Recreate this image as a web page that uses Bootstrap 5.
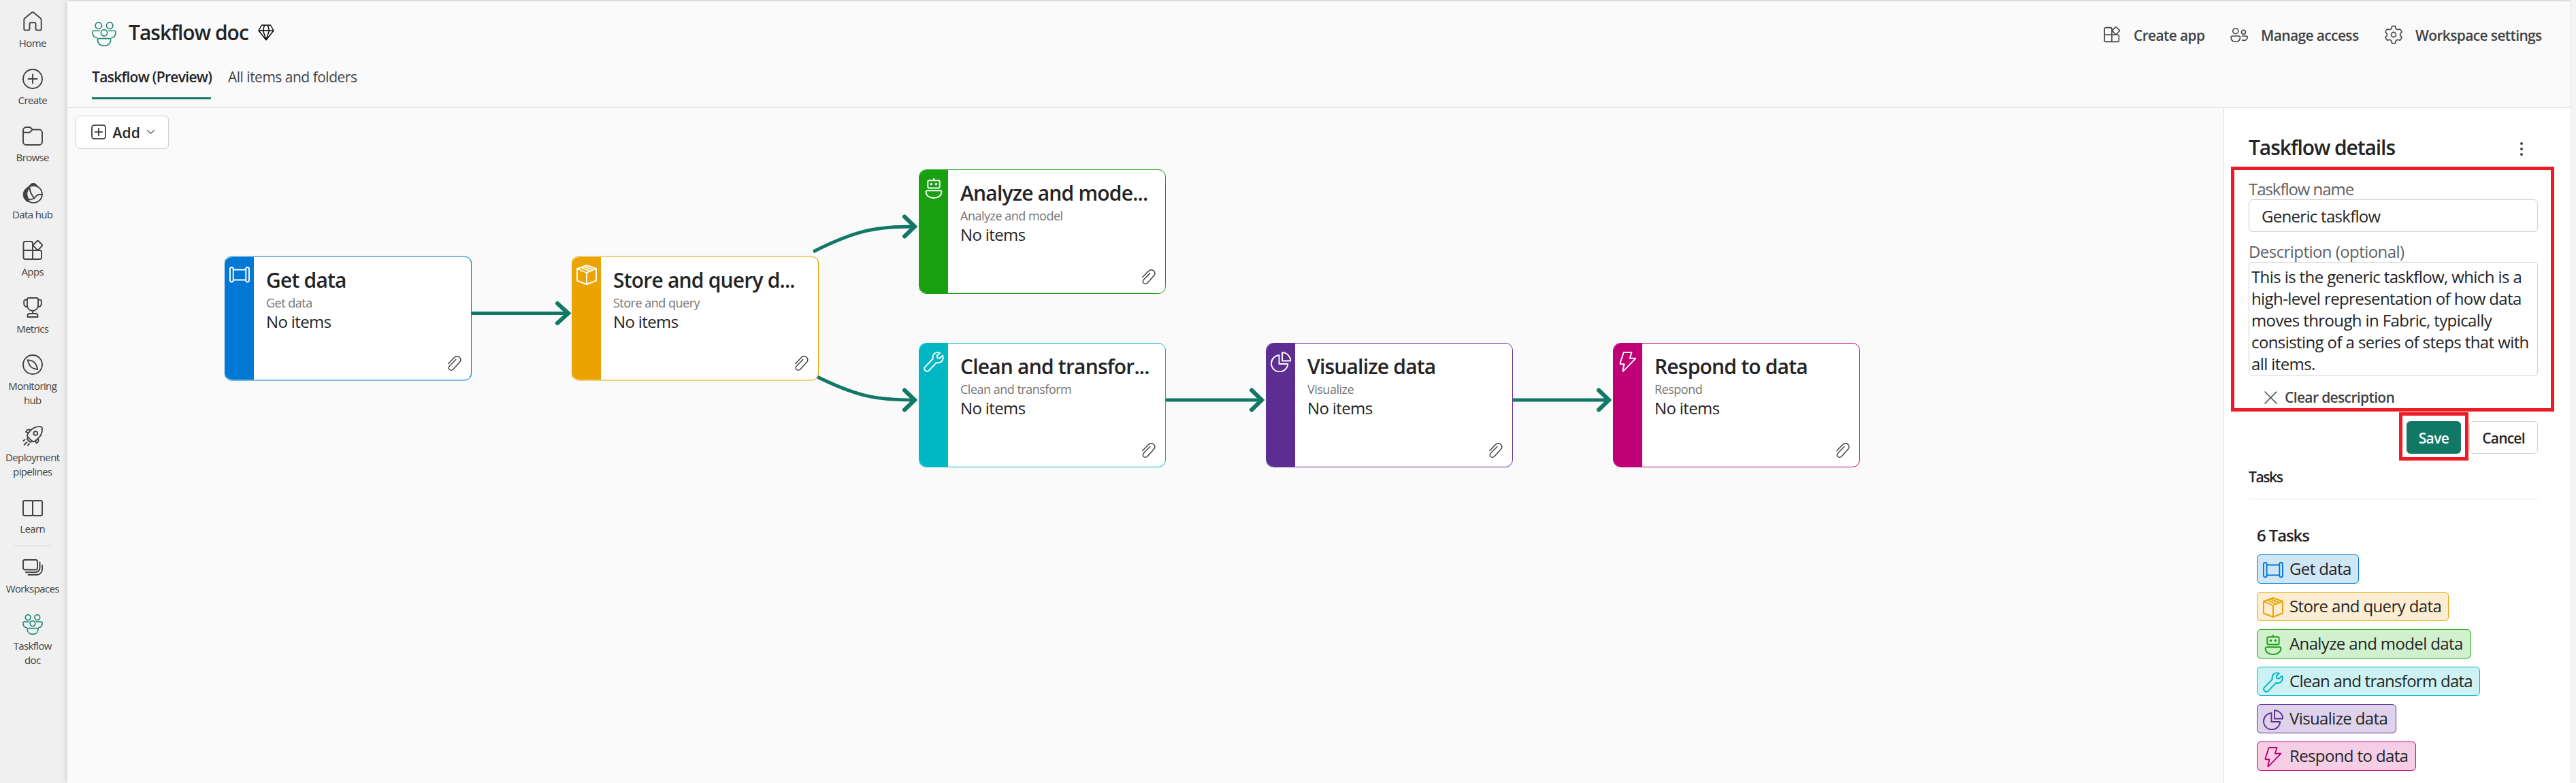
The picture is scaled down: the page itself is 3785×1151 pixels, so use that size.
<!DOCTYPE html>
<html lang="en">
<head>
<meta charset="utf-8">
<title>Taskflow doc</title>
<link rel="stylesheet" href="https://cdn.jsdelivr.net/npm/bootstrap@5.3.0/dist/css/bootstrap.min.css">
<script src="https://cdn.jsdelivr.net/npm/bootstrap@5.3.0/dist/js/bootstrap.bundle.min.js"></script>
<style>
body{font-family:"Open Sans","Noto Sans",sans-serif;font-size:24px;line-height:32px;color:#242424;background:#f0f0f0;letter-spacing:-.026em;overflow:hidden}
.shell{height:1151px}
.fw-semibold{font-weight:600!important}
svg{flex:none;fill:none;stroke:currentColor;stroke-linecap:round;stroke-linejoin:round;stroke-width:1.9px;overflow:visible}
symbol *{vector-effect:non-scaling-stroke}
.solid{fill:currentColor}
.i30{width:30px;height:30px}
/* left navigation */
.rail{width:98.5px;font-size:15px;line-height:21px;color:#424242}
.rail-item{padding:17px 6px 10px 3px;gap:6px}
.rail-sep{width:54px;margin:4px 0 -1px 21px;border-top:1px solid #d1d1d1}
.team{color:#1a8573;stroke-width:1.6px}
/* page frame */
.frame{margin-top:2px;background:#fafafa;box-shadow:0 0 9px rgba(0,0,0,.2);border-right:1px solid #e0e0e0}
.edge{width:7px;background:#f5f5f5}
.topbar{height:157px;border-bottom:1px solid #d1d1d1;padding:25px 0 0 36.5px}
.doc-title{font-size:30px;line-height:40px;letter-spacing:-1px;margin:1px 14px 0 18px}
.gem{color:#000;stroke-width:1.4px}
.tabs{gap:25px;font-size:21px;line-height:30px;padding-top:30px}
.tab-on{letter-spacing:-.7px;height:49px;width:175px;white-space:nowrap;padding-top:1px;border-bottom:3px solid #117865;border-radius:1px}
.tab-off{color:#424242;letter-spacing:-.5px;padding-top:1px}
.tool{font-size:21px;line-height:30px;gap:17px;color:#424242;letter-spacing:-.64px}
.tool svg{stroke-width:1.6px}
.tools{padding-top:9.5px}
/* canvas */
.add-btn{margin:11px 0 0 12px;width:137px;height:49px;border:1px solid #d1d1d1;border-radius:6px;background:#fff;font-size:21px;line-height:30px;padding:0 0 1px 22px;color:#242424;letter-spacing:.1px}
.wires{position:absolute;left:0;top:0;stroke:#117865;stroke-width:5px;stroke-linecap:butt}
.node{position:absolute;width:363px;height:183px;background:#fff;border:1px solid var(--c);border-radius:11px;overflow:hidden}
.node.soft{height:184px;border-top:2px solid color-mix(in srgb,var(--c) 50%,#fafafa);border-bottom:2px solid color-mix(in srgb,var(--c) 50%,#fafafa)}
.node.soft .stripe{margin:-1px 0}
.stripe{width:42px;background:var(--c);color:#fff;padding:8px 0 0 6px}
.node-body{padding:14px 0 0 18px;width:300px;line-height:32px;white-space:nowrap}
.node-title{font-size:30px;line-height:40px;letter-spacing:-.8px}
.node-kind{font-size:18px;line-height:24px;margin-top:1px;color:#757575;letter-spacing:-.5px}
.clip{position:absolute;right:14px;bottom:13px;width:20px;height:22px;color:#424242;stroke-width:1.5px}
/* details panel */
.details{width:510px;background:#fff;border-left:1px solid #e0e0e0;padding:37px 48px 0 36px}
.panel-title{font-size:30px;line-height:40px;letter-spacing:-1.1px;position:relative;top:1px}
.field-label{color:#616161;display:block;padding-top:1px;margin-bottom:-1px}
.box{border:1px solid #d1d1d1;border-radius:6px;width:425px;background:#fff}
.box.name{height:48px;padding:8px 0 0 18px;letter-spacing:-.71px}
.box.desc{height:168px;padding:4.500px 0 0 3px;letter-spacing:-.6px;white-space:nowrap}
.mark-box{position:absolute;border:5px solid #ed1c24;pointer-events:none}
.fields{padding-top:25px}
.clear-btn{gap:11px;margin:16px 0 0 23px;font-size:21px;line-height:30px;color:#424242;letter-spacing:-.64px}
.act{height:48px;font-size:21px;line-height:30px;border-radius:6px;padding:1px 0 0;letter-spacing:-.6px}
.act.save{width:80px;background:#117865;color:#fff;border:0}
.act.cancel{width:101px;background:#fff;color:#242424;border:1px solid #d1d1d1;letter-spacing:-.77px}
.actions{gap:12px;margin-top:20px;width:425px}
.tasks-head{font-size:21px;line-height:30px;margin-top:19px;padding-bottom:17px;border-bottom:1px solid #e0e0e0;width:425px;letter-spacing:-1.4px}
.count{margin:37px 0 12px 12px;letter-spacing:-1.1px}
.chips{gap:12px;margin-left:12px}
.chip{height:43px;border:1px solid var(--c);border-radius:6px;background:var(--b);padding:0 0 2px 8px;gap:9px;letter-spacing:-.62px}
.chip svg{color:var(--c);margin-top:5px}
.c-get{--c:#0078d4;--b:#cfe6f7}
.c-store{--c:#eaa300;--b:#fcedd3}
.c-model{--c:#18a010;--b:#d0f0ce}
.c-clean{--c:#00b7c3;--b:#ccf2f4}
.c-vis{--c:#5c2e91;--b:#dfd3ec}
.c-resp{--c:#bf0077;--b:#f5cde4}
</style>
</head>
<body>
<svg width="0" height="0" class="position-absolute">
<symbol id="home" viewBox="0 0 30 30"><path d="M2.3 12.4c0-1 .4-2 1.2-2.7L13.5 1.5a2.2 2.2 0 0 1 3 0l10 8.2c.8.7 1.2 1.7 1.2 2.7v13.2c0 1-.8 1.8-1.8 1.8h-4.6c-1 0-1.8-.8-1.8-1.8V18c0-1-.8-1.8-1.8-1.8h-5.4c-1 0-1.8.8-1.8 1.8v7.6c0 1-.8 1.8-1.8 1.8H4.1c-1 0-1.8-.8-1.8-1.8z"/></symbol>
<symbol id="create" viewBox="0 0 30 30"><circle cx="15" cy="15" r="14"/><path d="M15 8.500v13M8.500 15h13"/></symbol>
<symbol id="browse" viewBox="0 0 30 30"><path d="M1 6.500a4.500 4.500 0 0 1 4.500-4.500h4.300c1 0 1.800.3 2.500 1l2.200 2.500H24.500a4.500 4.500 0 0 1 4.500 4.500v13.500a4.500 4.500 0 0 1-4.500 4.500h-19A4.500 4.500 0 0 1 1 23.500zM1 9.800h8.500c.8 0 1.500-.3 2-.9L14.500 5.500"/></symbol>
<symbol id="hub" viewBox="0 0 30 30"><circle cx="16.300" cy="16.500" r="12.600"/><path class="solid" stroke-width="1" d="M8.500 6C3.500 8.500 1 13 1.200 17.500c.2 4.500 2.800 8.300 7 10.300L10 24.500C5.500 19 5.500 12 11 7zM9.500 5.500C11 2 13 .5 16 .5s5.500 2 7 6C19 3.800 14 3.300 9.500 5.500z"/><path d="M10.300 6.500c.8 6 3 11.500 7.500 16.300M8 23.800c5 1.200 8.500-.3 11-3.300s5-5 9.300-3"/></symbol>
<symbol id="apps" viewBox="0 0 30 30"><path d="M15 28V4.500A2.500 2.500 0 0 0 12.500 2h-8.500A2.500 2.500 0 0 0 1.500 4.500v21A2.500 2.500 0 0 0 4 28h21.500a2.500 2.500 0 0 0 2.500-2.500v-8a2.500 2.500 0 0 0-2.500-2.500h-24M21.300 1.500a1.700 1.700 0 0 1 2.400 0l4.800 4.900a1.700 1.700 0 0 1 0 2.400l-4.800 4.900a1.700 1.700 0 0 1-2.400 0l-4.800-4.900a1.700 1.700 0 0 1 0-2.400z"/></symbol>
<symbol id="cup" viewBox="0 0 30 30"><path d="M7 3.200A2.200 2.200 0 0 1 9.200 1h11.600A2.200 2.200 0 0 1 23 3.200V12a8 8 0 0 1-16 0zM7 3.800H4.200A2 2 0 0 0 2.200 5.800v3.700A4.800 4.800 0 0 0 7 14.300M23 3.800h2.800a2 2 0 0 1 2 2v3.700a4.800 4.800 0 0 1-4.800 4.800M15 20v4M7.500 29v-2a3 3 0 0 1 3-3h9a3 3 0 0 1 3 3v2z"/></symbol>
<symbol id="compass" viewBox="0 0 30 30"><circle cx="15" cy="15" r="14"/><path d="M7.800 8.300c3.800.3 7.200 1 9.500 3.200s3.800 5.500 5 10.500c-3.800-.5-7.300-1.500-9.600-3.600S8.800 13 7.800 8.300z"/></symbol>
<symbol id="rocket" viewBox="0 0 30 30"><path d="M27 1.300C20.500.5 15.500 3 11.500 7L7.800 11.800c-1 1.500-1 3.200.2 4.500l6 6c1.300 1.200 3 1.200 4.500.2l4.500-4C27.500 14.500 29.500 9 28.800 3.100A2 2 0 0 0 27 1.300z"/><circle cx="19.300" cy="11" r="2.900"/><path d="M12 6.500C9.500 4.500 6.500 5.500 5 8.800L8.700 10.500M22.500 19c2 2.200 1 5-2 6.300L18.500 22.300M8 16.500 6.800 19.500l5 4.500 2.700-1.500M1.500 22l2-1.800M2.500 28l4-4M8 28.500l2-2"/></symbol>
<symbol id="book" viewBox="0 0 30 30"><rect x="1" y="5" width="14" height="22" rx="2"/><rect x="15" y="5" width="14" height="22" rx="2"/></symbol>
<symbol id="spaces" viewBox="0 0 30 30"><rect x="1" y="4" width="21" height="14.500" rx="2.500"/><path d="M5 22.200h14a6.500 6.500 0 0 0 6.500-6.500V7.500M8.500 26H21a8 8 0 0 0 8-8v-6"/></symbol>
<symbol id="people" viewBox="0 0 30 30"><circle cx="8.200" cy="4.600" r="3.900"/><circle cx="21.800" cy="4.600" r="3.900"/><circle cx="15" cy="13.600" r="3.900"/><path d="M9.500 11H2.200A1.500 1.500 0 0 0 .8 12.500c0 4 2 6.800 5.500 7.300M20.500 11h7.300a1.500 1.500 0 0 1 1.400 1.500c0 4-2 6.800-5.500 7.300M8.500 20.500h13a1.500 1.500 0 0 1 1.500 1.500c0 4.500-3.300 7.400-8 7.400S7 26.500 7 22a1.500 1.500 0 0 1 1.500-1.500z"/></symbol>
<symbol id="gem" viewBox="0 0 24 24"><path d="M5.500 1h13L23 9 12 22.800 1 9zM1 9h22M9.500 1 7.500 9 12 22.500 16.500 9l-2-8"/></symbol>
<symbol id="users" viewBox="0 0 30 30"><circle cx="9.800" cy="8.700" r="4"/><circle cx="21.500" cy="10.300" r="3"/><path d="M4.800 16h10a1.700 1.700 0 0 1 1.700 1.700c0 4-2.500 6.600-6.700 6.600s-6.700-2.600-6.700-6.600A1.700 1.700 0 0 1 4.800 16zM19.500 16h6a1.700 1.700 0 0 1 1.700 1.700c0 3.500-3 5.500-7.700 4.300"/></symbol>
<symbol id="gear" viewBox="0 0 30 30"><path d="M12.500 2.600q2.500-.6 5 0L17.900 5q.3 1.700 1.900 2.300.8.300 1.700.2l2.800-.6q1.900 1.900 2.900 4.100l-2.300 2.400q-.9 1.600 0 3.200l2.300 2.400q-1 2.300-2.900 4.100l-2.800-.6q-3-.2-3.600 2.500l-.4 2.400q-2.500.6-5 0L12.100 25q-.6-2.700-3.600-2.500l-2.800.6q-1.900-1.800-2.900-4.100l2.300-2.400q.9-1.600 0-3.200L2.800 11q1-2.200 2.900-4.100l2.800.6q.9.100 1.700-.2 1.600-.6 1.900-2.300z"/><circle cx="15" cy="15" r="3.600"/></symbol>
<symbol id="clip" viewBox="0 0 20 22"><path d="M.8 11.500 9.300 2.800C11.500.6 14.200.4 16.500 1.700c2.900 2 3 5.300 1 7.600L8 19.800c-1.500 1.600-4 1.900-5.500.5C.8 18.800.9 16.700 2.300 15.200L11.800 5.500"/></symbol>
<symbol id="pipe" viewBox="0 0 30 30"><rect x="1" y="4" width="4.700" height="21.500" rx="2.200"/><rect x="24.300" y="4" width="4.700" height="21.500" rx="2.200"/><path d="M5.700 7.500h18.600M5.700 22.500h18.600"/></symbol>
<symbol id="cube" viewBox="0 0 30 30"><path d="M15 1 29 6v17.500L15 29 1 23.500V6zM1 6l14 6 14-6M15 12v17M11 2.600 24.500 8M6.500 4.200 20 9.800"/></symbol>
<symbol id="robot" viewBox="0 0 30 30"><rect x="6.300" y="3.200" width="17.400" height="11.300" rx="2"/><path d="M15 .5v2.500M5.300 18.300h19.400a1.700 1.700 0 0 1 1.700 1.700c0 5.500-4.500 9-11.400 9S3.600 25.500 3.600 20a1.700 1.700 0 0 1 1.700-1.700z"/><g class="solid" stroke="none"><circle cx="11.500" cy="8.800" r="1.800"/><circle cx="18.500" cy="8.800" r="1.800"/></g></symbol>
<symbol id="wrench" viewBox="0 0 30 30"><path d="M28 5.500 24 9.500 20.500 9.200 19.800 5.800 24 1.800C18.500-.3 12.300 3 13.800 10.500L2.200 22.300a3.900 3.900 0 0 0 5.500 5.500L19 16c7.500 1.800 11.300-5 9-10.500z"/></symbol>
<symbol id="pie" viewBox="0 0 30 30"><path d="M12.500 5.200A12.100 12.100 0 1 0 25.200 18H12.500zM17 1.300v12.200h12.200A12.200 12.200 0 0 0 17 1.300z"/></symbol>
<symbol id="bolt" viewBox="0 0 30 30"><path d="M8.700 1H20.500L17.800 9.800H26.300L8.300 28.300a.6.600 0 0 1-1-.6L9.500 18.300H4.300a.9.900 0 0 1-.8-1.200z"/></symbol>
</svg>

<div class="shell d-flex">
  <nav class="rail flex-shrink-0 text-center">
    <div class="rail-item d-flex flex-column align-items-center"><svg class="i30"><use href="#home"/></svg><span>Home</span></div>
    <div class="rail-item d-flex flex-column align-items-center"><svg class="i30"><use href="#create"/></svg><span>Create</span></div>
    <div class="rail-item d-flex flex-column align-items-center"><svg class="i30"><use href="#browse"/></svg><span>Browse</span></div>
    <div class="rail-item d-flex flex-column align-items-center"><svg class="i30"><use href="#hub"/></svg><span>Data hub</span></div>
    <div class="rail-item d-flex flex-column align-items-center"><svg class="i30"><use href="#apps"/></svg><span>Apps</span></div>
    <div class="rail-item d-flex flex-column align-items-center"><svg class="i30"><use href="#cup"/></svg><span>Metrics</span></div>
    <div class="rail-item d-flex flex-column align-items-center"><svg class="i30"><use href="#compass"/></svg><span>Monitoring<br>hub</span></div>
    <div class="rail-item d-flex flex-column align-items-center"><svg class="i30"><use href="#rocket"/></svg><span>Deployment<br>pipelines</span></div>
    <div class="rail-item d-flex flex-column align-items-center"><svg class="i30"><use href="#book"/></svg><span>Learn</span></div>
    <div class="rail-sep"></div>
    <div class="rail-item d-flex flex-column align-items-center"><svg class="i30"><use href="#spaces"/></svg><span>Workspaces</span></div>
    <div class="rail-item d-flex flex-column align-items-center"><svg class="i30 team"><use href="#people"/></svg><span>Taskflow<br>doc</span></div>
  </nav>

  <div class="frame flex-grow-1 d-flex flex-column">
    <header class="topbar d-flex justify-content-between flex-shrink-0">
      <div>
        <div class="d-flex align-items-center">
          <svg class="team" style="width:36px;height:36px;margin-top:5px"><use href="#people"/></svg>
          <h1 class="doc-title fw-semibold">Taskflow doc</h1>
          <svg class="gem" width="24" height="24"><use href="#gem"/></svg>
        </div>
        <div class="tabs d-flex" style="margin-top:-1px">
          <div class="tab-on fw-semibold">Taskflow (Preview)</div>
          <div class="tab-off">All items and folders</div>
        </div>
      </div>
      <div class="tools d-flex align-items-start">
        <div class="tool d-flex fw-semibold" style="width:187px"><svg width="24" height="24" style="margin:2px 3px 0"><use href="#apps"/></svg>Create app</div>
        <div class="tool d-flex fw-semibold" style="width:227px"><svg class="i30"><use href="#users"/></svg>Manage access</div>
        <div class="tool d-flex fw-semibold" style="width:275px"><svg class="i30" style="margin-top:-1px"><use href="#gear"/></svg>Workspace settings</div>
      </div>
    </header>

    <div class="d-flex flex-grow-1">
      <main class="flex-grow-1">
        <button class="add-btn d-flex align-items-center fw-semibold">
          <svg width="22" height="22" viewBox="0 0 22 22" style="stroke-width:1.6px"><rect x="1" y="1" width="20" height="20" rx="3.500"/><path d="M11 5.500v11M5.500 11h11"/></svg>
          <span style="margin:1px 10px 0 10px">Add</span>
          <svg width="11" height="6" viewBox="0 0 11 6" style="stroke-width:1.3px;color:#616161"><path d="M.5.500 5.500 5.300 10.500.500"/></svg>
        </button>
        <svg class="wires" width="2800" height="720">
          <path d="M693 460.500H836M1195 370C1260 337 1290 333 1345 333M1195 551C1260 584 1290 588 1345 588M1713 588h143M2223 588h143"/>
          <g stroke-width="6" stroke-linecap="round" stroke-linejoin="miter"><path d="M819 446l16 14.500-16 14.500M1329 318.500l15 14.500-15 14.500M1329 573.500l15 14.500-15 14.500M1839 573.500l15 14.500-15 14.500M2349 573.500l15 14.500-15 14.500"/></g>
        </svg>
        <div class="node soft d-flex c-get" style="left:330px;top:376px"><div class="stripe"><svg class="i30"><use href="#pipe"/></svg></div><div class="node-body"><div class="node-title fw-semibold">Get data</div><div class="node-kind">Get data</div>No items</div><svg class="clip"><use href="#clip"/></svg></div>
        <div class="node soft d-flex c-store" style="left:840px;top:376px"><div class="stripe"><svg class="i30"><use href="#cube"/></svg></div><div class="node-body"><div class="node-title fw-semibold">Store and query d...</div><div class="node-kind">Store and query</div>No items</div><svg class="clip"><use href="#clip"/></svg></div>
        <div class="node d-flex c-model" style="left:1350px;top:249px"><div class="stripe"><svg class="i30"><use href="#robot"/></svg></div><div class="node-body"><div class="node-title fw-semibold">Analyze and mode...</div><div class="node-kind">Analyze and model</div>No items</div><svg class="clip"><use href="#clip"/></svg></div>
        <div class="node d-flex c-clean" style="left:1350px;top:504px"><div class="stripe"><svg class="i30"><use href="#wrench"/></svg></div><div class="node-body"><div class="node-title fw-semibold">Clean and transfor...</div><div class="node-kind">Clean and transform</div>No items</div><svg class="clip"><use href="#clip"/></svg></div>
        <div class="node d-flex c-vis" style="left:1860px;top:504px"><div class="stripe"><svg class="i30"><use href="#pie"/></svg></div><div class="node-body"><div class="node-title fw-semibold">Visualize data</div><div class="node-kind">Visualize</div>No items</div><svg class="clip"><use href="#clip"/></svg></div>
        <div class="node d-flex c-resp" style="left:2370px;top:504px"><div class="stripe"><svg class="i30"><use href="#bolt"/></svg></div><div class="node-body"><div class="node-title fw-semibold">Respond to data</div><div class="node-kind">Respond</div>No items</div><svg class="clip"><use href="#clip"/></svg></div>
      </main>

      <aside class="details flex-shrink-0">
        <div class="d-flex justify-content-between align-items-center">
          <h2 class="panel-title fw-semibold m-0">Taskflow details</h2>
          <svg width="4" height="20" viewBox="0 0 4 20" style="margin:5px 22px 0 0;stroke:none;fill:#424242"><circle cx="2" cy="2" r="2"/><circle cx="2" cy="10" r="2"/><circle cx="2" cy="18" r="2"/></svg>
        </div>
        <div class="fields position-relative">
          <label class="field-label" style="letter-spacing:-1.05px">Taskflow name</label>
          <div class="box name">Generic taskflow</div>
          <label class="field-label" style="margin-top:12px;letter-spacing:-.56px">Description (optional)</label>
          <div class="box desc">This is the generic taskflow, which is a<br>high-level representation of how data<br>moves through in Fabric, typically<br>consisting of a series of steps that with<br>all items.</div>
          <div class="clear-btn d-flex align-items-center fw-semibold"><svg width="19" height="19" viewBox="0 0 19 19" style="stroke-width:1.5px"><path d="M1 1l17 17M18 1 1 18"/></svg>Clear description</div>
          <div class="mark-box" style="left:-26px;right:-24px;top:9px;bottom:-6px"></div>
        </div>
        <div class="actions d-flex justify-content-end">
          <div class="position-relative"><button class="act save fw-semibold">Save</button><div class="mark-box" style="left:-11px;right:-11px;top:-13px;bottom:-10px"></div></div>
          <button class="act cancel fw-semibold">Cancel</button>
        </div>
        <div class="tasks-head fw-semibold">Tasks</div>
        <div class="count fw-semibold">6 Tasks</div>
        <div class="chips d-flex flex-column">
          <div class="chip d-flex align-items-center c-get" style="width:150px"><svg class="i30"><use href="#pipe"/></svg>Get data</div>
          <div class="chip d-flex align-items-center c-store" style="width:282px"><svg class="i30"><use href="#cube"/></svg>Store and query data</div>
          <div class="chip d-flex align-items-center c-model" style="width:315px"><svg class="i30"><use href="#robot"/></svg>Analyze and model data</div>
          <div class="chip d-flex align-items-center c-clean" style="width:328px;letter-spacing:-.73px"><svg class="i30"><use href="#wrench"/></svg>Clean and transform data</div>
          <div class="chip d-flex align-items-center c-vis" style="width:205px"><svg class="i30"><use href="#pie"/></svg>Visualize data</div>
          <div class="chip d-flex align-items-center c-resp" style="width:234px"><svg class="i30"><use href="#bolt"/></svg>Respond to data</div>
        </div>
      </aside>
    </div>
  </div>
  <div class="edge flex-shrink-0"></div>
</div>
</body>
</html>
